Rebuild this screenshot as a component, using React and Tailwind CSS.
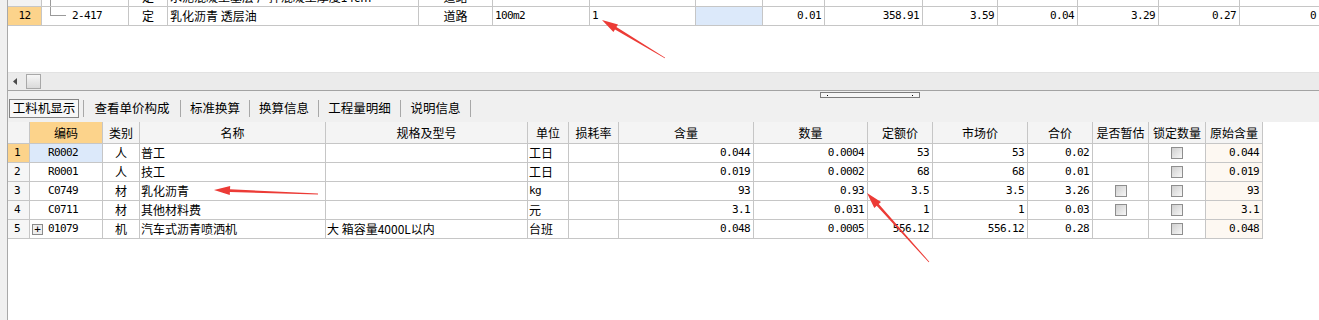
import React from 'react';

const cjk = "font-['Noto_Sans_CJK_SC','Noto_Sans',sans-serif]";
const mono = "font-['DejaVu_Sans_Mono',monospace] text-[11px] tracking-[-0.6px]";
const line = 'border-[#c6c6c6]';

// top grid column widths (border included)
const topCols = [
  'w-[34px]', 'w-[87px]', 'w-[39px]', 'w-[251px]', 'w-[74px]', 'w-[97px]', 'w-[106px]',
  'w-[67px]', 'w-[62px]', 'w-[98px]', 'w-[75px]', 'w-[80px]', 'w-[81px]', 'w-[81px]',
];

// bottom grid column widths (border included)
const botCols = [
  'w-[22px]', 'w-[73px]', 'w-[37px]', 'w-[186px]', 'w-[202px]', 'w-[41px]', 'w-[50px]',
  'w-[135px]', 'w-[114px]', 'w-[65px]', 'w-[95px]', 'w-[65px]', 'w-[56px]', 'w-[57px]', 'w-[57px]',
];

const topRows = [
  {
    no: '11', code: '2-356', type: '定', name: '水泥混凝土基层 厂拌混凝土厚度14cm', major: '道路',
    unit: '100m2', expr: '1', nums: ['0.01', '4666.52', '46.67', '0.47', '46.2', '0.07', '0'],
  },
  {
    no: '12', code: '2-417', type: '定', name: '乳化沥青 透层油', major: '道路',
    unit: '100m2', expr: '1', nums: ['0.01', '358.91', '3.59', '0.04', '3.29', '0.27', '0'],
    current: true,
  },
];

const items = [
  { no: '1', code: 'R0002', type: '人', name: '普工', spec: '', unit: '工日', qty: '0.044', num: '0.0004', base: '53', market: '53', total: '0.02', est: false, orig: '0.044' },
  { no: '2', code: 'R0001', type: '人', name: '技工', spec: '', unit: '工日', qty: '0.019', num: '0.0002', base: '68', market: '68', total: '0.01', est: false, orig: '0.019' },
  { no: '3', code: 'C0749', type: '材', name: '乳化沥青', spec: '', unit: 'kg', qty: '93', num: '0.93', base: '3.5', market: '3.5', total: '3.26', est: true, orig: '93' },
  { no: '4', code: 'C0711', type: '材', name: '其他材料费', spec: '', unit: '元', qty: '3.1', num: '0.031', base: '1', market: '1', total: '0.03', est: true, orig: '3.1' },
  { no: '5', code: '01079', type: '机', name: '汽车式沥青喷洒机', spec: '大 箱容量4000L以内', unit: '台班', qty: '0.048', num: '0.0005', base: '556.12', market: '556.12', total: '0.28', est: false, orig: '0.048', expand: true },
];

const headers = ['', '编码', '类别', '名称', '规格及型号', '单位', '损耗率', '含量', '数量', '定额价', '市场价', '合价', '是否暂估', '锁定数量', '原始含量'];

const tabs = [
  { label: '查看单价构成', w: 'w-[96px]' },
  { label: '标准换算', w: 'w-[68px]' },
  { label: '换算信息', w: 'w-[68px]' },
  { label: '工程量明细', w: 'w-[81px]' },
  { label: '说明信息', w: 'w-[69px]' },
];

function Cell({ w, className = '', children }) {
  return (
    <div className={`${w} shrink-0 h-full flex items-center border-r ${line} overflow-hidden whitespace-nowrap ${className}`}>
      {children}
    </div>
  );
}

function Check() {
  return <span className="block w-[12px] h-[12px] border border-[#8e8e8e] bg-linear-to-br from-[#cfcfcf] to-[#f7f7f7]" />;
}

function Arrow({ x1, y1, x2, y2 }) {
  // tapered red arrow, tail (x1,y1) -> tip (x2,y2)
  const dx = x2 - x1;
  const dy = y2 - y1;
  const len = Math.hypot(dx, dy);
  const ux = dx / len;
  const uy = dy / len;
  const px = -uy;
  const py = ux;
  const head = 16;
  const nx = x2 - ux * head;
  const ny = y2 - uy * head;
  const pt = (x, y) => `${x.toFixed(1)},${y.toFixed(1)}`;
  const pts = [
    pt(x1 + px * 0.4, y1 + py * 0.4),
    pt(nx + px * 1.4, ny + py * 1.4),
    pt(nx + px * 4.5, ny + py * 4.5),
    pt(x2, y2),
    pt(nx - px * 4.5, ny - py * 4.5),
    pt(nx - px * 1.4, ny - py * 1.4),
    pt(x1 - px * 0.4, y1 - py * 0.4),
  ].join(' ');
  return <polygon points={pts} fill="#ec3b36" />;
}

function TopRow({ r }) {
  return (
    <div className={`flex h-[19px] border-b ${line} text-[12px] text-black`}>
      <Cell w={topCols[0]} className={`justify-center ${mono} ${r.current ? 'bg-[#fcd38b]' : 'bg-[#f3f3f3]'}`}>{r.no}</Cell>
      <Cell w={topCols[1]} className="pl-[8px]">
        {r.current ? (
          <span className="self-start w-[16px] h-[9px] border-l border-b border-[#9a9a9a]" />
        ) : (
          <span className="self-stretch w-[16px] border-l border-[#9a9a9a]" />
        )}
        <span className={`ml-[6px] ${mono}`}>{r.code}</span>
      </Cell>
      <Cell w={topCols[2]} className={`justify-center ${cjk}`}>{r.type}</Cell>
      <Cell w={topCols[3]} className={`pl-[2px] ${cjk}`}>{r.name}</Cell>
      <Cell w={topCols[4]} className={`justify-center ${cjk}`}>{r.major}</Cell>
      <Cell w={topCols[5]} className={`pl-[2px] ${mono}`}>{r.unit}</Cell>
      <Cell w={topCols[6]} className={`pl-[2px] ${mono}`}>{r.expr}</Cell>
      <Cell w={topCols[7]} className={r.current ? 'bg-[#dce9fa]' : ''} />
      {r.nums.slice(0, 6).map((n, i) => (
        <Cell key={i} w={topCols[8 + i]} className={`justify-end pr-[3px] ${mono}`}>{n}</Cell>
      ))}
      <div className={`flex-1 h-full flex items-center justify-end pr-[3px] ${mono}`}>{r.nums[6]}</div>
    </div>
  );
}

export default function App() {
  return (
    <div className="relative w-[1319px] h-[320px] flex overflow-hidden bg-white text-black">
      {/* left splitter strip */}
      <div className="w-[8px] shrink-0 bg-[#f0f0f0] border-r border-[#a9a9a9]" />

      <div className="flex-1 flex flex-col min-w-0">
        {/* upper grid */}
        <div className="h-[72px] overflow-hidden">
          <div className="-mt-[12px]">
            {topRows.map((r) => (
              <TopRow key={r.no} r={r} />
            ))}
          </div>
        </div>

        {/* horizontal scroll bar */}
        <div className="h-[18px] bg-[#ebebeb] border-t border-[#e2e2e2] flex items-center">
          <svg width="4" height="7" viewBox="0 0 4 7" className="ml-[5px]">
            <polygon points="4,0 0,3.5 4,7" fill="#4a4a4a" />
          </svg>
          <span className="ml-[9px] w-[15px] h-[15px] border border-[#a8a8a8] bg-linear-to-b from-[#f6f6f6] to-[#dadada]" />
        </div>

        {/* tab area */}
        <div className="h-[32px] border-t border-[#a3a3a3] bg-[#f0f0f0] flex flex-col">
          <div className="h-[8px] flex items-start">
            <div className="ml-[812px] mt-[1px] w-[100px] h-[6px] border border-[#7c7c7c] bg-[#f6f6f6] flex items-center justify-between px-[6px]">
              <span className="w-px h-px bg-black" />
              <span className="w-px h-px bg-black" />
            </div>
          </div>
          <div className={`h-[19px] flex items-center text-[12.5px] ${cjk}`}>
            <div className="ml-[1px] w-[70px] h-full border border-[#858585] bg-[#f7f7f7] flex items-center justify-center">工料机显示</div>
            <span className="ml-[4px] w-px h-[17px] bg-[#a8a8a8]" />
            {tabs.map((t) => (
              <React.Fragment key={t.label}>
                <div className={`${t.w} h-full flex items-center justify-center`}>{t.label}</div>
                <span className="w-px h-[17px] bg-[#a8a8a8]" />
              </React.Fragment>
            ))}
          </div>
        </div>

        {/* lower grid */}
        <div className="flex-1 bg-white">
          <div className="w-fit">
            <div className={`flex h-[22px] border-b ${line} text-[12px] ${cjk} bg-[#f4f4f4]`}>
              {headers.map((h, i) => (
                <Cell key={i} w={botCols[i]} className={`justify-center ${i === 1 ? 'bg-[#fcd38b]' : ''}`}>{h}</Cell>
              ))}
            </div>
            {items.map((it) => (
              <div key={it.no} className={`flex h-[19px] border-b ${line} text-[12px]`}>
                <Cell w={botCols[0]} className={`pl-[6px] ${mono} ${it.no === '1' ? 'bg-[#fcd38b]' : 'bg-[#f6f6f6]'}`}>{it.no}</Cell>
                <Cell w={botCols[1]} className={`${mono} ${it.no === '1' ? 'bg-[#dce9fa]' : ''} ${it.expand ? 'pl-[2px]' : 'pl-[18px]'}`}>
                  {it.expand && (
                    <span className="w-[11px] h-[11px] mr-[5px] border border-[#8a8a8a] bg-[#eeeeee] flex items-center justify-center text-[11px] leading-none tracking-normal">+</span>
                  )}
                  {it.code}
                </Cell>
                <Cell w={botCols[2]} className={`justify-center ${cjk}`}>{it.type}</Cell>
                <Cell w={botCols[3]} className={`pl-[1px] ${cjk}`}>{it.name}</Cell>
                <Cell w={botCols[4]} className={`pl-[1px] ${cjk}`}>{it.spec}</Cell>
                <Cell w={botCols[5]} className={`pl-[1px] ${it.unit === 'kg' ? mono : cjk}`}>{it.unit}</Cell>
                <Cell w={botCols[6]} />
                <Cell w={botCols[7]} className={`justify-end pr-[3px] ${mono}`}>{it.qty}</Cell>
                <Cell w={botCols[8]} className={`justify-end pr-[3px] ${mono}`}>{it.num}</Cell>
                <Cell w={botCols[9]} className={`justify-end pr-[3px] ${mono}`}>{it.base}</Cell>
                <Cell w={botCols[10]} className={`justify-end pr-[3px] ${mono}`}>{it.market}</Cell>
                <Cell w={botCols[11]} className={`justify-end pr-[3px] ${mono}`}>{it.total}</Cell>
                <Cell w={botCols[12]} className="justify-center">{it.est && <Check />}</Cell>
                <Cell w={botCols[13]} className="justify-center"><Check /></Cell>
                <Cell w={botCols[14]} className={`justify-end pr-[3px] bg-[#fdf8f2] ${mono}`}>{it.orig}</Cell>
              </div>
            ))}
          </div>
        </div>
      </div>

      {/* red annotation arrows over the grids */}
      <svg className="absolute inset-0 pointer-events-none" width="1319" height="320" viewBox="0 0 1319 320">
        <Arrow x1={665} y1={58} x2={602} y2={20} />
        <Arrow x1={318} y1={194} x2={214} y2={190} />
        <Arrow x1={929} y1={262} x2={867} y2={193} />
      </svg>
    </div>
  );
}
